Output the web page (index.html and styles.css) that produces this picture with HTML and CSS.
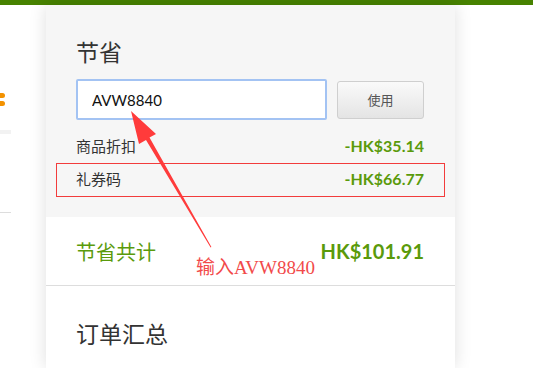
FILE: index.html
```html
<!DOCTYPE html>
<html lang="zh-CN">
<head>
    <meta charset="UTF-8">
    <meta name="viewport" content="width=device-width, initial-scale=1.0">
    <title>结账</title>
    <link rel="stylesheet" href="styles.css">
</head>
<body>
    <div class="top-bar"></div>
    <div class="page">
        <div class="side">
            <div class="dots"><span></span><span></span></div>
            <div class="side-bar"></div>
            <div class="side-line"></div>
        </div>
        <div class="panel">
            <div class="savings">
                <h2>节省</h2>
                <form class="coupon">
                    <input type="text" value="AVW8840">
                    <button type="button">使用</button>
                </form>
                <div class="row">
                    <span>商品折扣</span>
                    <span class="amount">-HK$35.14</span>
                </div>
                <div class="row marked">
                    <span>礼券码</span>
                    <span class="amount">-HK$66.77</span>
                </div>
            </div>
            <div class="total">
                <span>节省共计</span>
                <span class="amount">HK$101.91</span>
            </div>
            <div class="summary">
                <h2>订单汇总</h2>
            </div>
        </div>
    </div>

    <!-- screenshot annotation -->
    <svg class="arrow" width="533" height="368" viewBox="0 0 533 368">
        <polygon points="131,111 156,134 149.5,137.5 211.4,247 210.6,247.4 146,140 139,144" fill="#ff3b3b"/>
    </svg>
    <div class="note">输入AVW8840</div>
</body>
</html>
```

FILE: styles.css
```css
body {
    margin: 0;
    background: #fff;
    font-family: Lato, "Noto Sans CJK SC", sans-serif;
    color: #333;
    overflow: hidden;
}
.top-bar {
    height: 5px;
    background: #478200;
}
.page {
    display: flex;
    gap: 35px;
}
.side {
    width: 11px;
    display: flex;
    flex-direction: column;
}
.dots {
    margin-top: 88px;
    display: flex;
    flex-direction: column;
    gap: 3px;
}
.dots span {
    display: block;
    width: 5px;
    height: 5px;
    border-radius: 0 50% 50% 0;
    background: #f39200;
}
.side-bar {
    margin-top: 24px;
    height: 4px;
    background: #f2f2f2;
}
.side-line {
    margin-top: 78px;
    height: 1px;
    background: #ddd;
}
.panel {
    width: 409px;
    height: 363px;
    background: #fff;
    box-shadow: 0 0 16px rgba(0, 0, 0, 0.13);
}
h2 {
    margin: 0;
    font-size: 23px;
    line-height: 30px;
    font-weight: normal;
    color: #333;
}
.savings {
    background: #f6f6f6;
    padding: 32px 31px 22px 30px;
}
.coupon {
    display: flex;
    align-items: center;
    gap: 10px;
    margin: 12px 0 9px;
}
.coupon input {
    box-sizing: border-box;
    width: 251px;
    height: 41px;
    padding: 0 14px;
    border: 2px solid #a3c3f3;
    border-radius: 2px;
    font-family: Lato, sans-serif;
    font-size: 15px;
    color: #111;
    outline: none;
}
.coupon button {
    width: 87px;
    height: 38px;
    border: 1px solid #cfcfcf;
    border-radius: 3px;
    background: linear-gradient(#fafafa, #e4e4e4);
    font-family: "Noto Sans CJK SC", sans-serif;
    font-size: 13px;
    color: #555;
}
.row {
    position: relative;
    display: flex;
    justify-content: space-between;
    align-items: center;
    height: 33px;
    font-size: 15px;
}
.row.marked::after {
    content: "";
    position: absolute;
    top: 1px;
    bottom: -2px;
    left: -20px;
    right: -21px;
    border: 1px solid #f23c3c;
}
.amount {
    font-weight: bold;
    color: #5a9a0b;
    font-size: 16px;
}
.total {
    display: flex;
    justify-content: space-between;
    align-items: center;
    height: 30px;
    padding: 19px 31px 19px 30px;
    border-bottom: 1px solid #ddd;
    font-size: 20px;
    color: #5a9a0b;
}
.total .amount {
    font-size: 20px;
}
.summary {
    padding: 33px 30px;
}
.arrow {
    position: absolute;
    top: 0;
    left: 0;
}
.note {
    position: absolute;
    left: 196px;
    top: 256px;
    font-family: "Liberation Serif", "Noto Sans CJK SC", serif;
    font-size: 19px;
    line-height: 24px;
    color: #f24a4a;
}
```
